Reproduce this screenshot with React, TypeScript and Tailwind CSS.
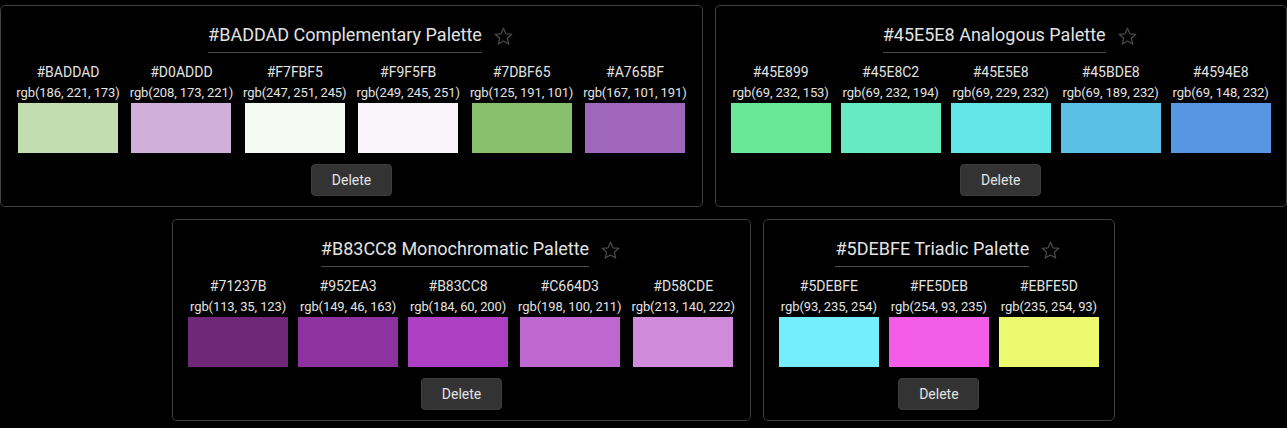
const palettes = [
  { name: '#BADDAD Complementary Palette', colors: ['#BADDAD', '#D0ADDD', '#F7FBF5', '#F9F5FB', '#7DBF65', '#A765BF'] },
  { name: '#45E5E8 Analogous Palette', colors: ['#45E899', '#45E8C2', '#45E5E8', '#45BDE8', '#4594E8'] },
  { name: '#B83CC8 Monochromatic Palette', colors: ['#71237B', '#952EA3', '#B83CC8', '#C664D3', '#D58CDE'] },
  { name: '#5DEBFE Triadic Palette', colors: ['#5DEBFE', '#FE5DEB', '#EBFE5D'] },
];

// swatch colours as they show on screen
const shown: Record<string, string> = {
  '#BADDAD': '#C2DEB0', '#D0ADDD': '#D0AFDB', '#F7FBF5': '#F5FAF3', '#F9F5FB': '#F8F4FA',
  '#7DBF65': '#88C06D', '#A765BF': '#A066BA',
  '#45E899': '#69E898', '#45E8C2': '#66EAC3', '#45E5E8': '#64E6E8', '#45BDE8': '#5CBFE6', '#4594E8': '#5696E3',
  '#71237B': '#6F2777', '#952EA3': '#8E32A0', '#B83CC8': '#AD40C2', '#C664D3': '#BE68CF', '#D58CDE': '#D08CDB',
  '#5DEBFE': '#74EDFD', '#FE5DEB': '#F25CE6', '#EBFE5D': '#EDFA70',
};

const toRgb = (hex: string) => {
  const n = parseInt(hex.slice(1), 16);
  return `rgb(${(n >> 16) & 255}, ${(n >> 8) & 255}, ${n & 255})`;
};

const Star = () => (
  <svg width="19" height="18" viewBox="0 0 24 23" className="ml-3 mr-3 -mt-[3px] shrink-0">
    <path
      d="M12 1.5l3.1 7.2 7.6.6-5.8 5 1.8 7.5L12 17.8l-6.7 4 1.8-7.5-5.8-5 7.6-.6z"
      fill="none"
      stroke="#4a4a4a"
      strokeWidth="1.6"
      strokeLinejoin="round"
    />
  </svg>
);

const PaletteCard = ({ name, colors }: { name: string; colors: string[] }) => (
  <div className="border border-[#3f3f3f] rounded-[5px] px-[15px] pt-[16px] pb-[10px] flex flex-col items-center">
    <div className="flex items-center justify-center">
      <span className="w-[30px]" />
      <h2 className="text-[18px] leading-[26px] pb-[4px] border-b border-[#4a4a4a] text-[#e3e3e3] whitespace-nowrap">
        {name}
      </h2>
      <Star />
    </div>
    <div className="flex gap-[10px] mt-[9px]">
      {colors.map((c) => (
        <div key={c} className="flex flex-col items-center min-w-[100px]">
          <div className="text-[14px] leading-[20px] text-[#e3e3e3] whitespace-nowrap">{c}</div>
          <div className="text-[13px] leading-[20px] tracking-[-0.1px] mt-[1px] text-[#e3e3e3] whitespace-nowrap">
            {toRgb(c)}
          </div>
          <div className="w-[100px] h-[50px]" style={{ backgroundColor: shown[c] ?? c }} />
        </div>
      ))}
    </div>
    <button className="mt-[11px] w-[81px] h-[32px] bg-[#333333] border border-[#3d3d3d] rounded-[4px] text-[14px] text-[#e3e3e3]">
      Delete
    </button>
  </div>
);

export default function App() {
  return (
    <div
      className="min-h-screen bg-black pt-[5px] flex flex-wrap justify-center gap-3 content-start"
      style={{ fontFamily: 'Roboto, "Noto Sans", sans-serif' }}
    >
      {palettes.map((p) => (
        <PaletteCard key={p.name} name={p.name} colors={p.colors} />
      ))}
    </div>
  );
}
